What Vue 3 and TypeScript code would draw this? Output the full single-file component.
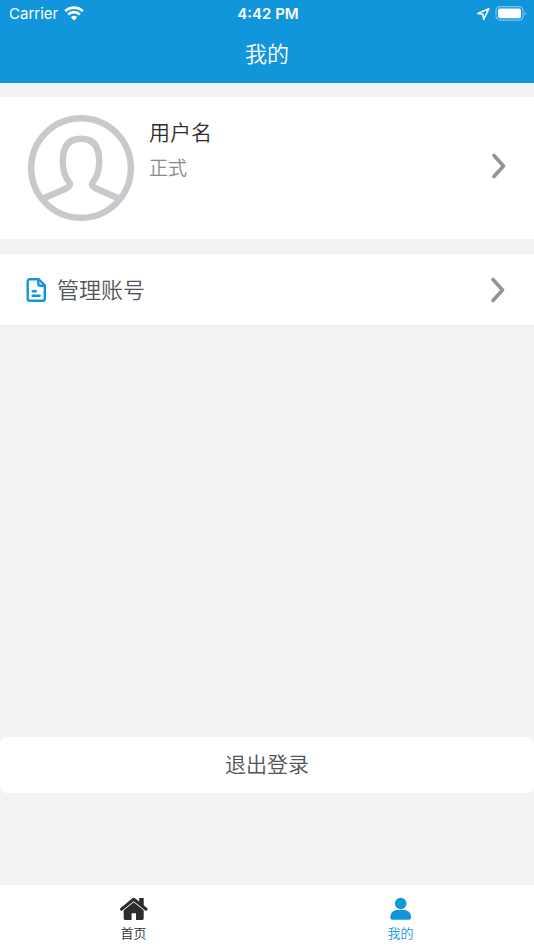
<script setup lang="ts">
import { ref } from 'vue'

type TabKey = 'home' | 'mine'

interface Tab {
  key: TabKey
  label: string
}

const tabs: Tab[] = [
  { key: 'home', label: '首页' },
  { key: 'mine', label: '我的' },
]
const activeTab = ref<TabKey>('mine')
const user = { name: '用户名', status: '正式' }
</script>

<template>
  <div class="page">
    <header class="header">
      <div class="status-bar">
        <div class="carrier">
          <span>Carrier</span>
          <svg class="wifi" viewBox="0 0 20 15" aria-hidden="true">
            <path d="M1.200 5.200a12.500 12.500 0 0 1 17.600 0M4.200 8.500a8.200 8.200 0 0 1 11.600 0" fill="none" stroke="#fff" stroke-width="2.600" />
            <path d="M6.800 11.300a4.800 4.800 0 0 1 6.400 0L10 14.600z" fill="#fff" />
          </svg>
        </div>
        <div class="time">4:42 PM</div>
        <div class="indicators">
          <svg class="location" viewBox="0 0 14 14" aria-hidden="true">
            <path d="M12.800 1.600 1.800 6.500l5.200.8.700 5.200z" fill="none" stroke="#fff" stroke-width="1.500" stroke-linejoin="round" />
          </svg>
          <svg class="battery" viewBox="0 0 32 15" aria-hidden="true">
            <rect x="1" y=".7" width="27" height="13.400" rx="4" fill="none" stroke="#fff" stroke-opacity=".45" stroke-width="1.200" />
            <rect x="3" y="2.600" width="23" height="9.600" rx="2" fill="#fff" />
            <path d="M29.700 5.200q1.900 2.200 0 4.400z" fill="#fff" fill-opacity=".55" />
          </svg>
        </div>
      </div>
      <h1 class="title">我的</h1>
    </header>

    <main class="content">
      <a class="profile" href="#profile">
        <svg class="avatar" viewBox="0 0 106 106" aria-hidden="true">
          <g fill="none" stroke="#c8c9cd" stroke-width="6.400">
            <circle cx="53" cy="53" r="49.800" />
            <path d="M14 84 38 73.500Q44 70.500 41 67C36 61 34.800 54 34.800 46C34.800 31 41 23.800 53 23.800S71.200 31 71.200 46C71.200 54 70 61 65 67Q62 70.500 68 73.500L92 84" stroke-linejoin="round" />
          </g>
        </svg>
        <div class="user">
          <div class="name">{{ user.name }}</div>
          <div class="state">{{ user.status }}</div>
        </div>
        <svg class="chevron" viewBox="0 0 14 26" aria-hidden="true">
          <path d="M2 2.500 11.500 13 2 23.500" />
        </svg>
      </a>

      <a class="row" href="#account">
        <svg class="doc" viewBox="0 0 20 24" aria-hidden="true">
          <g fill="none" stroke="#1296db" stroke-width="2.400" stroke-linejoin="round" stroke-linecap="round">
            <path d="M12.800 1.300H3.700a2 2 0 0 0-2 2v17.400a2 2 0 0 0 2 2h13.100a2 2 0 0 0 2-2V7.300z" />
            <path d="M12.300 1.600v4.100a2 2 0 0 0 2 2h4.100M6.700 13.200h3.200M6.700 17.800h7" />
          </g>
        </svg>
        <span class="row-label">管理账号</span>
        <svg class="chevron" viewBox="0 0 14 26" aria-hidden="true">
          <path d="M2 2.500 11.500 13 2 23.500" />
        </svg>
      </a>

      <button class="logout" type="button">退出登录</button>
    </main>

    <nav class="tabs">
      <button
        v-for="tab in tabs"
        :key="tab.key"
        type="button"
        class="tab"
        :class="{ active: activeTab === tab.key }"
        @click="activeTab = tab.key"
      >
        <svg v-if="tab.key === 'home'" class="tab-icon" viewBox="0 0 28 24" aria-hidden="true">
          <path d="M12.400 1.200q1.300-1 2.600 0L19.200 4.600V1h4.500v7.300l3.800 3.200q.5.500 0 1l-.9 1.100q-.5.500-1 .1L13.700 4.300 1.800 13.700q-.5.400-1-.1l-.9-1.100q-.4-.5.100-1z" fill="currentColor" />
          <path d="M13.700 5.300 23.700 13.300v8.300q0 1.300-1.300 1.300H16v-6.600h-4.400v6.600H5q-1.300 0-1.300-1.300v-8.300z" fill="currentColor" />
        </svg>
        <svg v-else class="tab-icon" viewBox="0 0 28 24" aria-hidden="true">
          <circle cx="13.700" cy="6.500" r="5.800" fill="currentColor" />
          <path d="M3.300 20.500C3.300 15 7 13 10.500 13h6.400c3.500 0 7.200 2 7.200 7.500q0 2.300-2.300 2.300H5.600q-2.300 0-2.300-2.300z" fill="currentColor" />
        </svg>
        <span>{{ tab.label }}</span>
      </button>
    </nav>
  </div>
</template>

<style>
body {
  margin: 0;
  background: #f3f3f3;
}
</style>

<style scoped>
.page {
  display: flex;
  flex-direction: column;
  min-height: 100vh;
  background: #f3f3f3;
  color: #2c2c2c;
  font-family: Inter, "Noto Sans CJK SC", sans-serif;
  font-weight: 350;
}

svg {
  display: block;
  flex: none;
}

button {
  border: 0;
  padding: 0;
  font: inherit;
  cursor: pointer;
}

a {
  color: inherit;
  text-decoration: none;
}

.header {
  background: #1296db;
  color: #fff;
  padding-bottom: 11px;
}

.status-bar {
  display: grid;
  grid-template-columns: 1fr auto 1fr;
  align-items: center;
  height: 27px;
  padding: 0 7px 0 9px;
  font-size: 15px;
  font-weight: 400;
}

.carrier,
.indicators {
  display: flex;
  align-items: center;
  gap: 6px;
}

.indicators {
  justify-content: flex-end;
  gap: 5px;
}

.wifi {
  width: 20px;
  height: 15px;
}

.time {
  font-weight: 600;
}

.location {
  width: 14px;
  height: 14px;
}

.battery {
  width: 32px;
  height: 15px;
}

.title {
  margin: 0;
  padding-top: 9px;
  font-size: 22px;
  line-height: 36px;
  font-weight: 350;
  text-align: center;
}

.content {
  display: flex;
  flex: 1;
  flex-direction: column;
  padding: 14px 0 92px;
}

.profile,
.row {
  display: flex;
  align-items: center;
  background: #fff;
}

.profile {
  padding: 18px 28px;
  gap: 15px;
}

.profile .chevron {
  margin-bottom: 4px;
}

.avatar {
  width: 106px;
  height: 106px;
}

.user {
  flex: 1;
  align-self: flex-start;
}

.name {
  font-size: 21px;
  line-height: 36px;
}

.state {
  color: #8a8a8a;
  font-size: 19px;
  line-height: 36px;
}

.chevron {
  width: 14px;
  height: 26px;
  fill: none;
  stroke: #949494;
  stroke-width: 3.600;
  stroke-linecap: round;
  stroke-linejoin: round;
}

.row {
  gap: 11px;
  margin-top: 14px;
  padding: 18px 29px 17px 26px;
  border: solid #ebebeb;
  border-width: 1px 0;
  color: #515459;
}

.doc {
  width: 20px;
  height: 24px;
}

.row-label {
  flex: 1;
  font-size: 22px;
  line-height: 36px;
}

.logout {
  margin-top: auto;
  border-radius: 7px;
  background: #fff;
  color: #515459;
  font-size: 21px;
  line-height: 56px;
}

.tabs {
  display: flex;
  background: #fff;
}

.tab {
  display: flex;
  flex: 1;
  flex-direction: column;
  align-items: center;
  gap: 2px;
  padding: 12px 0 7px;
  background: none;
  color: #2c2c2c;
  font-size: 13px;
  line-height: 20px;
}

.tab.active {
  color: #1296db;
}

.tab-icon {
  width: 28px;
  height: 24px;
}
</style>
